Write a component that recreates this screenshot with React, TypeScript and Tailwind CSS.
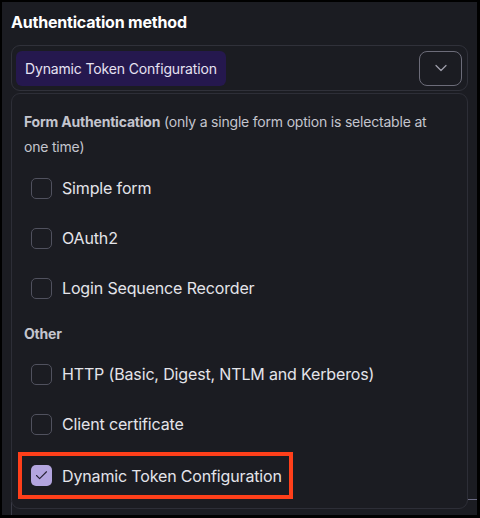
import { ChevronDown, Check } from 'lucide-react'

type Option = { label: string; checked?: boolean; highlight?: boolean }

const formOptions: Option[] = [
  { label: 'Simple form' },
  { label: 'OAuth2' },
  { label: 'Login Sequence Recorder' },
]

const otherOptions: Option[] = [
  { label: 'HTTP (Basic, Digest, NTLM and Kerberos)' },
  { label: 'Client certificate' },
  { label: 'Dynamic Token Configuration', checked: true, highlight: true },
]

function Checkbox({ checked }: { checked?: boolean }) {
  if (checked) {
    return (
      <span className="flex h-[21px] w-[21px] shrink-0 items-center justify-center rounded-[5px] bg-[#b3a5df]">
        <Check className="h-[15px] w-[15px] text-[#262235]" strokeWidth={1.75} />
      </span>
    )
  }
  return <span className="h-[21px] w-[21px] shrink-0 rounded-[5px] border-[1.5px] border-[#50515e]" />
}

function OptionRow({ option }: { option: Option }) {
  const content = (
    <>
      <Checkbox checked={option.checked} />
      <span className="text-[16px] leading-[20px] tracking-[-0.15px] text-[#e4e4ea]">{option.label}</span>
    </>
  )

  if (option.highlight) {
    return (
      <div className="flex h-[50px] items-start">
        <div className="-ml-[6px] mt-[3px] flex h-[47px] items-center gap-[10px] border-4 border-[#ff3f1a] pl-[9px] pr-[7px]">
          {content}
        </div>
      </div>
    )
  }

  return <div className="flex h-[50px] items-center gap-[10px] pl-[7px]">{content}</div>
}

export default function App() {
  return (
    <div
      className="h-[518px] w-[480px] overflow-hidden border-b-[3px] border-l-2 border-r-[3px] border-t-2 border-black bg-[#1b1c22]"
      style={{ fontFamily: 'Inter, "Noto Sans", sans-serif' }}
    >
      <div className="relative h-full px-[9px] pt-[8px]">
        {/* Title */}
        <h2 className="text-[16px] font-bold leading-[24px] tracking-[-0.2px] text-white">Authentication method</h2>

        {/* Select */}
        <div className="mt-[11px] flex h-[46px] items-center justify-between rounded-[9px] border border-[#30313a] pl-[4px] pr-[5px]">
          <span className="flex h-[35px] items-center rounded-[6px] bg-[#25184e] px-[9px] text-[14px] tracking-[-0.15px] text-[#e6e2f2]">
            Dynamic Token Configuration
          </span>
          <button className="flex h-[35px] w-[43px] items-center justify-center rounded-[8px] border border-[#6c6c79]">
            <ChevronDown className="h-[20px] w-[20px] text-[#9d9daa]" strokeWidth={1.5} />
          </button>
        </div>

        {/* Dropdown panel */}
        <div className="relative z-10 mt-[2px] rounded-[9px] border border-[#2d2e37] bg-[#1b1c22] px-[12px] pb-[9px] pt-[15px]">
          <p className="text-[14px] leading-[25px] tracking-[-0.2px] text-[#c4c5ce]">
            <span className="font-bold">Form Authentication</span> (only a single form option is selectable at
            <br />
            one time)
          </p>
          <div className="mt-[4px]">
            {formOptions.map((o) => (
              <OptionRow key={o.label} option={o} />
            ))}
          </div>
          <p className="mt-[8px] text-[14px] font-bold leading-[25px] tracking-[-0.2px] text-[#c4c5ce]">Other</p>
          <div className="mt-[3px]">
            {otherOptions.map((o) => (
              <OptionRow key={o.label} option={o} />
            ))}
          </div>
        </div>

        {/* content peeking from behind the panel */}
        <div className="absolute right-0 top-[497px] h-px w-[9px] bg-[#6a6a82]" />
        <div className="absolute left-[9px] top-[500px] h-[20px] w-px bg-[#3a3b46]" />
      </div>
    </div>
  )
}
